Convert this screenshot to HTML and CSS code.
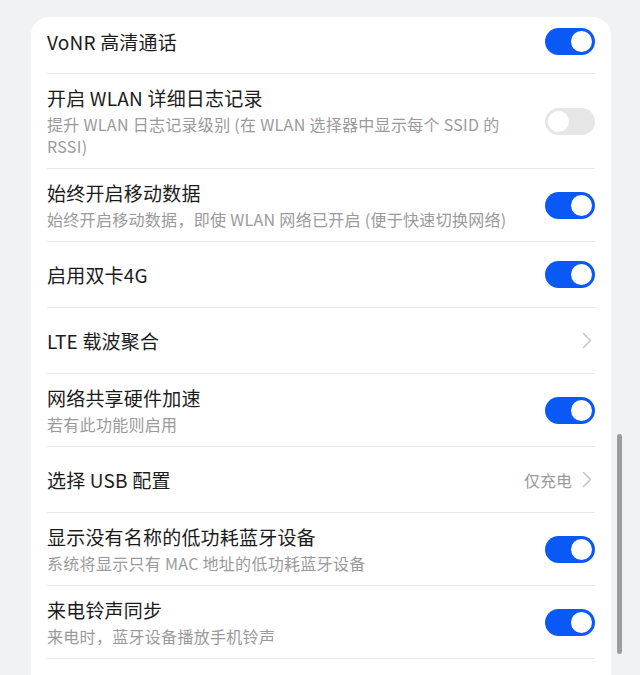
FILE: index.html
```html
<!DOCTYPE html>
<html lang="zh-CN">

<head>
    <meta charset="UTF-8">
    <meta name="viewport" content="width=device-width, initial-scale=1.0">
    <link rel="stylesheet" href="styles.css">
</head>

<body>
    <div class="card">
        <div class="row row-first">
            <div class="text">
                <p class="title">VoNR 高清通话</p>
            </div>
            <span class="switch on"></span>
        </div>
        <div class="row">
            <div class="text">
                <p class="title">开启 WLAN 详细日志记录</p>
                <p class="sub">提升 WLAN 日志记录级别 (在 WLAN 选择器中显示每个 SSID 的 RSSI)</p>
            </div>
            <span class="switch"></span>
        </div>
        <div class="row">
            <div class="text">
                <p class="title">始终开启移动数据</p>
                <p class="sub">始终开启移动数据，即使 WLAN 网络已开启 (便于快速切换网络)</p>
            </div>
            <span class="switch on"></span>
        </div>
        <div class="row single">
            <div class="text">
                <p class="title">启用双卡4G</p>
            </div>
            <span class="switch on"></span>
        </div>
        <div class="row single">
            <div class="text">
                <p class="title">LTE 载波聚合</p>
            </div>
            <svg class="chevron" width="10" height="17" viewBox="0 0 10 17">
                <path d="M1.5 1.5 L8.5 8.5 L1.5 15.5" fill="none" stroke="#c4c4c4" stroke-width="1.5" stroke-linecap="round" stroke-linejoin="round" />
            </svg>
        </div>
        <div class="row">
            <div class="text">
                <p class="title">网络共享硬件加速</p>
                <p class="sub">若有此功能则启用</p>
            </div>
            <span class="switch on"></span>
        </div>
        <div class="row single">
            <div class="text">
                <p class="title">选择 USB 配置</p>
            </div>
            <span class="value">仅充电</span>
            <svg class="chevron" width="10" height="17" viewBox="0 0 10 17">
                <path d="M1.5 1.5 L8.5 8.5 L1.5 15.5" fill="none" stroke="#c4c4c4" stroke-width="1.5" stroke-linecap="round" stroke-linejoin="round" />
            </svg>
        </div>
        <div class="row">
            <div class="text">
                <p class="title">显示没有名称的低功耗蓝牙设备</p>
                <p class="sub">系统将显示只有 MAC 地址的低功耗蓝牙设备</p>
            </div>
            <span class="switch on"></span>
        </div>
        <div class="row">
            <div class="text">
                <p class="title">来电铃声同步</p>
                <p class="sub">来电时，蓝牙设备播放手机铃声</p>
            </div>
            <span class="switch on"></span>
        </div>
    </div>

    <div class="scroll-thumb"></div>
</body>

</html>
```

FILE: styles.css
```css
html {
    background-color: #f1f2f4;
    overflow: hidden;
}

body {
    margin: 17px 29px 0 31px;
    font-family: "Noto Sans CJK SC", "Noto Sans", sans-serif;
}

p {
    margin: 0;
}

.card {
    background-color: #fff;
    border-radius: 18px;
    padding: 0 16px 40px;
}

.row {
    display: flex;
    align-items: center;
    padding: 11px 0;
    border-bottom: 1px solid #e8e8e8;
}

.row-first {
    height: 57px;
    box-sizing: border-box;
    padding: 0 0 7px;
}

.single {
    min-height: 66px;
    box-sizing: border-box;
}

.text {
    flex: 1;
    padding-right: 18px;
}

.title {
    font-size: 19px;
    line-height: 26px;
    color: #1b1b1b;
    letter-spacing: 0.2px;
}

.sub {
    margin-top: 2px;
    font-size: 16px;
    line-height: 22px;
    color: #9a9a9a;
    letter-spacing: 0.3px;
}

.value {
    font-size: 16px;
    color: #9a9a9a;
    margin-right: 10px;
}

.chevron {
    margin-right: 3px;
}

.switch {
    position: relative;
    flex: none;
    width: 50px;
    height: 27px;
    border-radius: 14px;
    background-color: #e6e6e6;
}

.switch::after {
    content: "";
    position: absolute;
    top: 3px;
    left: 3px;
    width: 21px;
    height: 21px;
    border-radius: 50%;
    background-color: #fff;
}

.switch.on {
    background-color: #0a59f7;
}

.switch.on::after {
    left: 26px;
}

.scroll-thumb {
    position: fixed;
    left: 617px;
    top: 434px;
    width: 5px;
    height: 220px;
    border-radius: 3px;
    background-color: #9c9c9c;
}
```
